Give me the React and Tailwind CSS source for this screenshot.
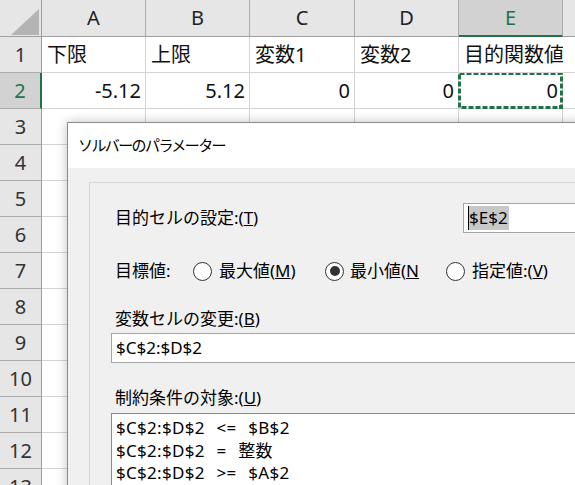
import React from "react";

const cols = ["A", "B", "C", "D", "E", "F"];
const font = { fontFamily: '"Noto Sans", "Noto Sans CJK JP", sans-serif' };

const cellData = {
  1: ["下限", "上限", "変数1", "変数2", "目的関数値", ""],
  2: ["-5.12", "5.12", "0", "0", "0", ""],
};

const Radio = ({ checked }) => (
  <span className="w-[19px] h-[19px] rounded-full border border-[#333] bg-white flex items-center justify-center shrink-0">
    {checked && <span className="w-[10px] h-[10px] rounded-full bg-[#333]" />}
  </span>
);

const SheetRow = ({ n }) => {
  const selectedRow = n === 2;
  const data = cellData[n] || ["", "", "", "", "", ""];
  return (
    <div className="grid grid-cols-[42px_104px_104px_105px_104px_104px_104px] h-[36px] shrink-0 leading-none">
      <div
        className={`flex items-center justify-center border-b text-[20px] ${
          selectedRow
            ? "bg-[#d2d2d2] text-[#217346] border-r-2 border-r-[#217346] border-b-[#ababab]"
            : "bg-[#e6e6e6] text-[#333] border-r border-r-[#9e9e9e] border-b-[#ababab]"
        }`}
      >
        {n}
      </div>
      {data.map((v, i) => (
        <div
          key={i}
          className={`relative flex items-center whitespace-nowrap border-r border-b border-[#d4d4d4] bg-white text-[20px] text-[#111] ${
            n === 2 ? "justify-end pr-[4px]" : "pl-[5px] z-10"
          } ${n === 1 && i === 4 ? "border-r-transparent" : ""}`}
        >
          {v}
          {n === 2 && i === 4 && (
            <>
              <svg className="absolute left-[-1px] top-[-1px] w-[105px] h-[37px]" viewBox="0 0 105 37">
                <rect x="1.5" y="1.5" width="102" height="34" fill="none" stroke="#217346" strokeWidth="3" strokeDasharray="5 2" />
              </svg>
              <span className="absolute right-[-3px] bottom-[-3px] w-[6px] h-[6px] bg-[#217346]" />
            </>
          )}
        </div>
      ))}
    </div>
  );
};

export default function App() {
  const rows = [1, 2, 3, 4, 5, 6, 7, 8, 9, 10, 11, 12, 13];
  return (
    <div className="relative w-[575px] h-[485px] overflow-hidden bg-white" style={font}>
      <div className="flex flex-col">
        <div className="grid grid-cols-[42px_104px_104px_105px_104px_104px_104px] h-[37px] shrink-0 leading-none">
          <div className="relative bg-[#e6e6e6] border-r border-b border-[#9e9e9e]">
            <svg className="absolute left-[11px] top-[9px]" width="28" height="26" viewBox="0 0 28 26">
              <polygon points="28,0 28,26 0,26" fill="#b4b4b4" />
            </svg>
          </div>
          {cols.map((c) => (
            <div
              key={c}
              className={`flex items-center justify-center text-[20px] border-r border-b ${
                c === "E"
                  ? "bg-[#d2d2d2] text-[#217346] border-r-[#ababab] border-b-2 border-b-[#217346]"
                  : "bg-[#e6e6e6] text-[#222] border-r-[#ababab] border-b-[#9e9e9e]"
              }`}
            >
              {c}
            </div>
          ))}
        </div>
        {rows.map((n) => (
          <SheetRow key={n} n={n} />
        ))}
      </div>

      {/* Solver dialog window */}
      <div className="absolute z-20 left-[67px] top-[122px] w-[530px] h-[400px] border border-[#8c8c8c] bg-[#f0f0f0] shadow-[0_0_10px_rgba(0,0,0,0.25)] flex flex-col">
        <div className="h-[45px] bg-white flex items-center pl-[10px] text-[15px] tracking-[-1.6px] text-black shrink-0">
          ソルバーのパラメーター
        </div>
        <div className="pt-[14px] pl-[21px] flex-1">
          <div className="border-l border-t border-[#d8d8d8] h-full flex flex-col text-[17px] text-black whitespace-nowrap">
            <div className="flex items-center h-[30px] mt-[20px] pl-[25px]">
              <span className="w-[348px] shrink-0">
                目的セルの設定:(<span className="underline">T</span>)
              </span>
              <div className="h-[30px] w-[200px] shrink-0 border border-[#a5a5a5] bg-white flex items-center pl-[4px]">
                <span className="border-l border-black bg-[#c8c8c8] leading-[24px] pr-[1px]">$E$2</span>
              </div>
            </div>

            <div className="flex items-center h-[24px] mt-[26px] pl-[25px]">
              <span className="w-[78px] shrink-0">目標値:</span>
              <Radio />
              <span className="ml-[7px] w-[106px] shrink-0">
                最大値(<span className="underline">M</span>)
              </span>
              <Radio checked />
              <span className="ml-[6px] w-[96px] shrink-0">
                最小値(<span className="underline">N</span>
              </span>
              <Radio />
              <span className="ml-[7px] shrink-0">
                指定値:(<span className="underline">V</span>)
              </span>
            </div>

            <div className="h-[24px] mt-[24px] pl-[25px] flex items-center">
              変数セルの変更:(<span className="underline">B</span>)
            </div>
            <div className="h-[30px] mt-[2px] ml-[21px] border border-[#a5a5a5] bg-white flex items-center pl-[4px]">
              $C$2:$D$2
            </div>

            <div className="h-[24px] mt-[23px] pl-[25px] flex items-center">
              制約条件の対象:(<span className="underline">U</span>)
            </div>
            <div className="h-[120px] mt-[3px] ml-[21px] border border-[#8a8a96] bg-white pl-[4px] pt-[3px] leading-[22.5px] [word-spacing:7px] tracking-[0.3px]">
              <div>$C$2:$D$2 &lt;= $B$2</div>
              <div>$C$2:$D$2 = 整数</div>
              <div>$C$2:$D$2 &gt;= $A$2</div>
            </div>
          </div>
        </div>
      </div>
    </div>
  );
}
